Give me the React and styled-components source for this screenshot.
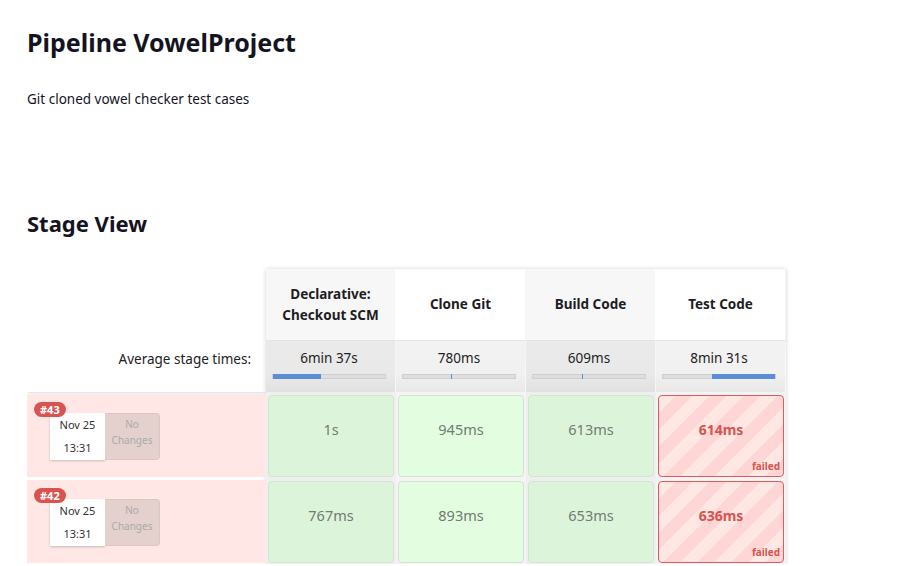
import styled, { createGlobalStyle } from 'styled-components';

const GlobalStyle = createGlobalStyle`
  body {
    margin: 0;
    background: #fff;
    font-family: 'Noto Sans', 'Open Sans', sans-serif;
    color: #14141f;
  }
`;

const stages = [
  { name: 'Declarative: Checkout SCM', avg: '6min 37s', start: 0, width: 43 },
  { name: 'Clone Git', avg: '780ms', start: 43, width: 0 },
  { name: 'Build Code', avg: '609ms', start: 43.5, width: 0 },
  { name: 'Test Code', avg: '8min 31s', start: 44, width: 56 },
];

const builds = [
  { id: 43, date: 'Nov 25', time: '13:31', cells: ['1s', '945ms', '613ms', '614ms'], failed: 3 },
  { id: 42, date: 'Nov 25', time: '13:31', cells: ['767ms', '893ms', '653ms', '636ms'], failed: 3 },
];

const App = () => {
  return (
    <Page className='Page'>
      <GlobalStyle />
      <Title>Pipeline VowelProject</Title>
      <Description>Git cloned vowel checker test cases</Description>
      <SectionTitle>Stage View</SectionTitle>

      <Table className='Table'>
        {/* Left: builds */}
        <LeftColumn className='LeftColumn'>
          <Corner />
          <AvgLabel>Average stage times:</AvgLabel>
          {builds.map((b) => (
            <BuildInfo key={b.id}>
              <Badge>#{b.id}</Badge>
              <DateBox>
                <span>{b.date}</span>
                <span>{b.time}</span>
              </DateBox>
              <Changes>
                No
                <br />
                Changes
              </Changes>
            </BuildInfo>
          ))}
        </LeftColumn>

        {/* Right: stages */}
        <StageGrid className='StageGrid'>
          {stages.map((s, i) => (
            <StageHeader key={s.name} $odd={i % 2 === 0}>
              {s.name}
            </StageHeader>
          ))}
          {stages.map((s, i) => (
            <AvgCell key={s.name} $odd={i % 2 === 0}>
              <span>{s.avg}</span>
              <Track>
                <Fill style={{ left: `${s.start}%`, width: s.width ? `${s.width}%` : '1px' }} />
              </Track>
            </AvgCell>
          ))}
          {builds.map((b) =>
            b.cells.map((c, i) => (
              <CellWrap key={`${b.id}-${i}`} $odd={i % 2 === 0}>
                {b.failed === i ? (
                  <FailedCell>
                    {c}
                    <FailedTag>failed</FailedTag>
                  </FailedCell>
                ) : (
                  <Cell $odd={i % 2 === 0}>{c}</Cell>
                )}
              </CellWrap>
            ))
          )}
        </StageGrid>
      </Table>
    </Page>
  );
};
export default App;

const Page = styled.div`
  padding: 25px 0 0 27px;
`;

const Title = styled.h1`
  margin: 0;
  font-size: 25px;
  font-weight: 700;
  line-height: 35px;
`;

const Description = styled.p`
  margin: 30px 0 0;
  font-size: 13.5px;
  line-height: 19px;
`;

const SectionTitle = styled.h2`
  margin: 99px 0 0;
  font-size: 22px;
  font-weight: 700;
  line-height: 30px;
`;

const Table = styled.div`
  display: flex;
  margin-top: 31px;
`;

const LeftColumn = styled.div`
  width: 239px;
  display: flex;
  flex-direction: column;
`;

const Corner = styled.div`
  height: 71px;
`;

const AvgLabel = styled.div`
  height: 52px;
  display: flex;
  align-items: center;
  justify-content: flex-end;
  padding: 0 15px 14px 0;
  box-sizing: border-box;
  font-size: 13.5px;
  color: #222;
  box-shadow: 0 2px 2px -1px rgba(0, 0, 0, 0.15);
`;

const BuildInfo = styled.div`
  position: relative;
  height: 83px;
  margin: 2px 0 1px;
  padding: 19px 0 0 23px;
  box-sizing: border-box;
  background: #fee7e4;
  display: flex;
  align-items: flex-start;
`;

const Badge = styled.span`
  position: absolute;
  top: 8px;
  left: 7px;
  padding: 0 6px;
  height: 15px;
  line-height: 15px;
  border-radius: 8px;
  background: #d9534f;
  color: #fff;
  font-size: 11px;
  font-weight: 700;
  z-index: 1;
`;

const DateBox = styled.div`
  width: 55px;
  height: 47px;
  box-sizing: border-box;
  padding-bottom: 2px;
  background: #fff;
  box-shadow: 0 1px 2px rgba(0, 0, 0, 0.2);
  display: flex;
  flex-direction: column;
  align-items: center;
  justify-content: center;
  font-size: 11px;
  line-height: 23px;
  color: #333;
`;

const Changes = styled.div`
  width: 55px;
  height: 47px;
  box-sizing: border-box;
  padding-top: 2px;
  background: #e4d1ce;
  border: 1px solid #dac7c4;
  border-left: none;
  border-radius: 0 4px 4px 0;
  text-align: center;
  font-size: 10px;
  line-height: 16px;
  color: #a9a9a9;
`;

const StageGrid = styled.div`
  display: grid;
  grid-template-columns: repeat(4, 130px);
  box-shadow: 0 0 4px rgba(0, 0, 0, 0.18);
`;

const StageHeader = styled.div`
  height: 71px;
  display: flex;
  align-items: center;
  justify-content: center;
  text-align: center;
  padding: 0 12px;
  box-sizing: border-box;
  background: ${(p) => (p.$odd ? '#f7f7f7' : '#ffffff')};
  font-size: 13.5px;
  font-weight: 700;
  line-height: 21px;
  color: #1d1d24;
  border-right: 1px solid ${(p) => (p.$odd ? '#fff' : '#f4f4f4')};
`;

const AvgCell = styled.div`
  height: 52px;
  box-sizing: border-box;
  padding: 8px 9px 0 6px;
  display: flex;
  flex-direction: column;
  align-items: center;
  background: ${(p) =>
    p.$odd
      ? 'linear-gradient(to bottom, #eaeaea 0%, #e9e9e9 65%, #e1e1e1 100%)'
      : 'linear-gradient(to bottom, #f2f2f2 0%, #f1f1f1 65%, #e8e8e8 100%)'};
  border-top: 1px solid #e4e4e4;
  border-right: 1px solid #f6f6f6;
  font-size: 13.5px;
  color: #222;
  line-height: 19px;
`;

const Track = styled.div`
  position: relative;
  width: 100%;
  height: 5px;
  margin-top: 6px;
  box-sizing: border-box;
  background: #dedede;
  border: 1px solid #cfcfcf;
`;

const Fill = styled.div`
  position: absolute;
  top: -1px;
  bottom: -1px;
  min-width: 1px;
  background: #5b8ed8;
`;

const CellWrap = styled.div`
  height: 86px;
  box-sizing: border-box;
  padding: 3px 2px 1px;
  background: ${(p) => (p.$odd ? '#efefef' : '#f4f4f4')};
  display: flex;
`;

const Cell = styled.div`
  flex: 1;
  display: flex;
  align-items: center;
  justify-content: center;
  padding-bottom: 14px;
  border-radius: 4px;
  border: 1px solid #d4e4d1;
  background: ${(p) => (p.$odd ? '#dcf5da' : '#e3fde1')};
  color: #737b73;
  font-size: 14.5px;
`;

const FailedCell = styled.div`
  position: relative;
  flex: 1;
  display: flex;
  align-items: center;
  justify-content: center;
  padding-bottom: 14px;
  border-radius: 4px;
  border: 1px solid #e25a5a;
  background: repeating-linear-gradient(
    135deg,
    #ffe8e4 0 12px,
    #ffd6d6 12px 24px
  );
  color: #d9534f;
  font-size: 14px;
  font-weight: 700;
`;

const FailedTag = styled.span`
  position: absolute;
  right: 3px;
  bottom: 3px;
  font-size: 10px;
  font-weight: 700;
  color: #d9534f;
`;
